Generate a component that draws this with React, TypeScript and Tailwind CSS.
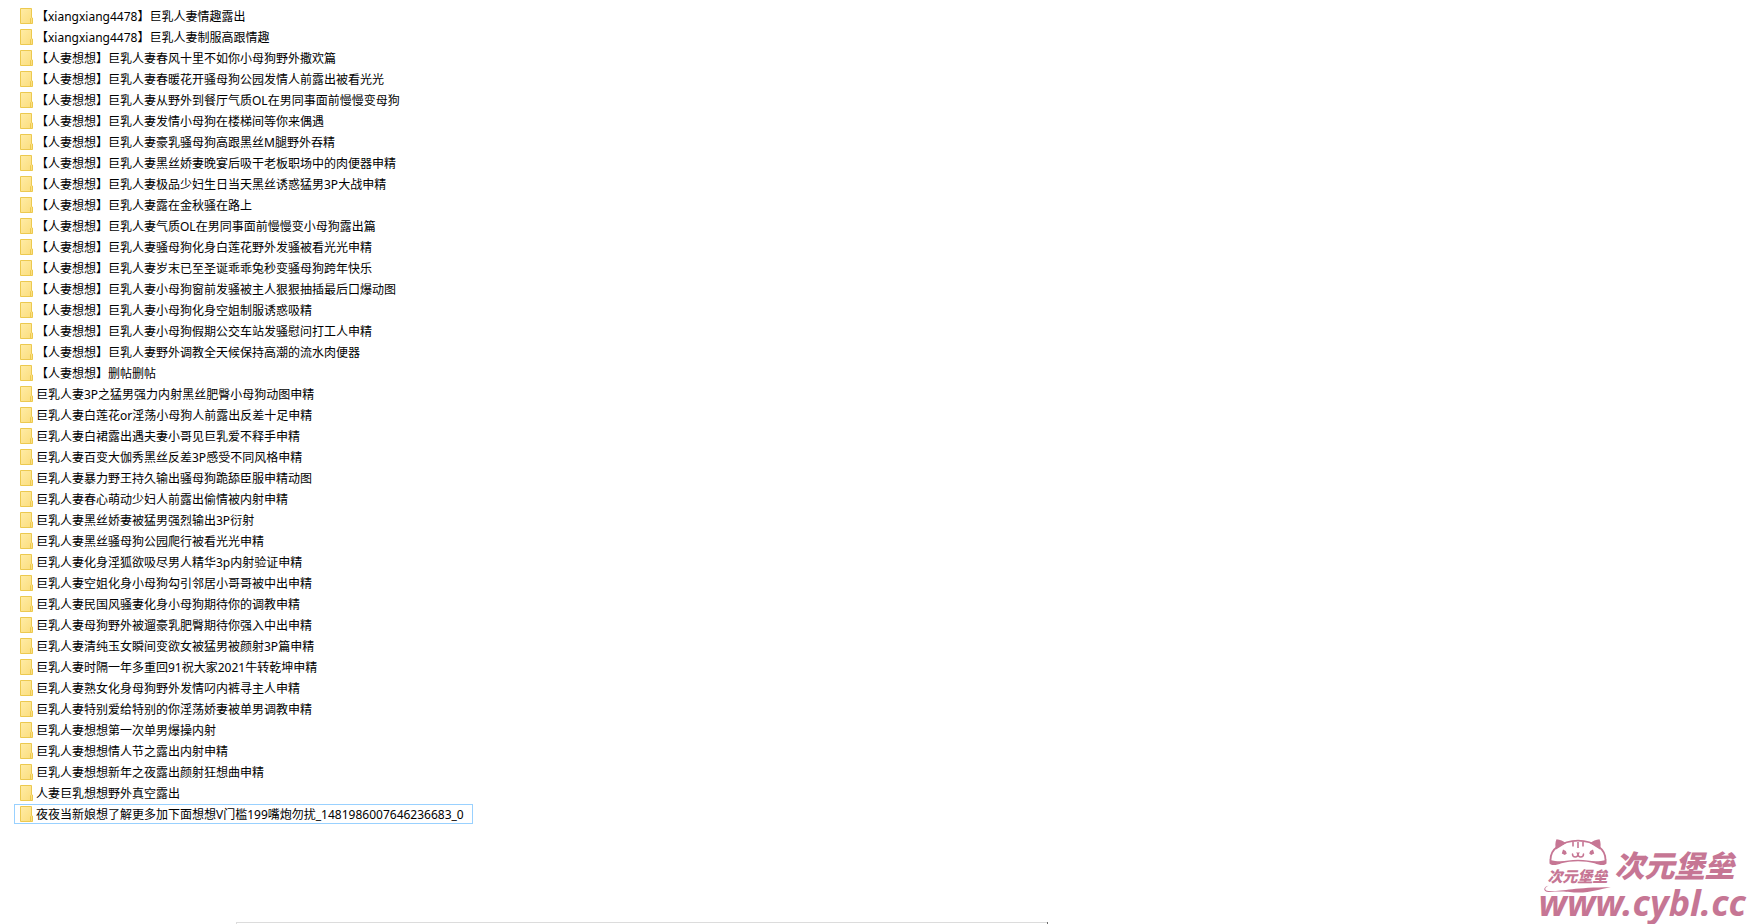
const names: string[] = [
  "【xiangxiang4478】巨乳人妻情趣露出",
  "【xiangxiang4478】巨乳人妻制服高跟情趣",
  "【人妻想想】巨乳人妻春风十里不如你小母狗野外撒欢篇",
  "【人妻想想】巨乳人妻春暖花开骚母狗公园发情人前露出被看光光",
  "【人妻想想】巨乳人妻从野外到餐厅气质OL在男同事面前慢慢变母狗",
  "【人妻想想】巨乳人妻发情小母狗在楼梯间等你来偶遇",
  "【人妻想想】巨乳人妻豪乳骚母狗高跟黑丝M腿野外吞精",
  "【人妻想想】巨乳人妻黑丝娇妻晚宴后吸干老板职场中的肉便器申精",
  "【人妻想想】巨乳人妻极品少妇生日当天黑丝诱惑猛男3P大战申精",
  "【人妻想想】巨乳人妻露在金秋骚在路上",
  "【人妻想想】巨乳人妻气质OL在男同事面前慢慢变小母狗露出篇",
  "【人妻想想】巨乳人妻骚母狗化身白莲花野外发骚被看光光申精",
  "【人妻想想】巨乳人妻岁末已至圣诞乖乖兔秒变骚母狗跨年快乐",
  "【人妻想想】巨乳人妻小母狗窗前发骚被主人狠狠抽插最后口爆动图",
  "【人妻想想】巨乳人妻小母狗化身空姐制服诱惑吸精",
  "【人妻想想】巨乳人妻小母狗假期公交车站发骚慰问打工人申精",
  "【人妻想想】巨乳人妻野外调教全天候保持高潮的流水肉便器",
  "【人妻想想】删帖删帖",
  "巨乳人妻3P之猛男强力内射黑丝肥臀小母狗动图申精",
  "巨乳人妻白莲花or淫荡小母狗人前露出反差十足申精",
  "巨乳人妻白裙露出遇夫妻小哥见巨乳爱不释手申精",
  "巨乳人妻百变大伽秀黑丝反差3P感受不同风格申精",
  "巨乳人妻暴力野王持久输出骚母狗跪舔臣服申精动图",
  "巨乳人妻春心萌动少妇人前露出偷情被内射申精",
  "巨乳人妻黑丝娇妻被猛男强烈输出3P衍射",
  "巨乳人妻黑丝骚母狗公园爬行被看光光申精",
  "巨乳人妻化身淫狐欲吸尽男人精华3p内射验证申精",
  "巨乳人妻空姐化身小母狗勾引邻居小哥哥被中出申精",
  "巨乳人妻民国风骚妻化身小母狗期待你的调教申精",
  "巨乳人妻母狗野外被遛豪乳肥臀期待你强入中出申精",
  "巨乳人妻清纯玉女瞬间变欲女被猛男被颜射3P篇申精",
  "巨乳人妻时隔一年多重回91祝大家2021牛转乾坤申精",
  "巨乳人妻熟女化身母狗野外发情叼内裤寻主人申精",
  "巨乳人妻特别爱给特别的你淫荡娇妻被单男调教申精",
  "巨乳人妻想想第一次单男爆操内射",
  "巨乳人妻想想情人节之露出内射申精",
  "巨乳人妻想想新年之夜露出颜射狂想曲申精",
  "人妻巨乳想想野外真空露出",
  "夜夜当新娘想了解更多加下面想想V门槛199嘴炮勿扰_1481986007646236683_0",
];

const focusedIndex = names.length - 1;

function FolderIcon() {
  return (
    <svg width="13" height="16" viewBox="0 0 13 16" className="shrink-0" aria-hidden="true">
      <defs>
        <linearGradient id="folder" x1="0" y1="0" x2="1" y2="1">
          <stop offset="0" stopColor="#ffeca6" />
          <stop offset="1" stopColor="#fbdd7c" />
        </linearGradient>
      </defs>
      <path d="M.5.5h11v9l1 .5v5.500H.5z" fill="url(#folder)" stroke="#ecc94f" />
      <path d="M10.500 15.500v-5l1-1" fill="none" stroke="#ecc94f" />
    </svg>
  );
}

function FolderRow({ name, focused }: { name: string; focused: boolean }) {
  return (
    <li className="flex h-[21px] items-start">
      <button
        type="button"
        className={
          "flex h-5 items-center gap-[3px] border pr-2 pl-[5px] text-xs leading-4 whitespace-nowrap text-black " +
          (focused ? "border-[#99d1ff]" : "border-transparent")
        }
      >
        <FolderIcon />
        <span className="pt-[2px]">{name}</span>
      </button>
    </li>
  );
}

function CatMark() {
  return (
    <svg width="62" height="29" viewBox="0 0 62 29" aria-hidden="true">
      <path
        d="M3.500 22C3.500 16 6.500 11.500 10 9c12-8.500 30-8.500 42 0 3.500 2.500 6.500 7 6.500 13"
        fill="none"
        stroke="currentColor"
        strokeWidth="1.800"
      />
      <path
        d="M9.500 1.200c3.500.3 7 1.800 9.500 4L9 11.500C8 8 8.200 4 9.500 1.200zM52.500 1.200c-3.500.3-7 1.800-9.500 4l10 6.300c1-3.500.8-7.500-.5-10.300z"
        fill="currentColor"
      />
      <path
        d="M2.500 25.500V21.500C14 25.500 20 21.800 31 21.800s17 3.700 28.500-.3v4c-3 3-8 1-12-.3-9-2.700-24-2.700-33 0-4 1.300-9 3.300-12 .3z"
        fill="currentColor"
      />
      <path d="M26 4v4.500M31 4v6M36 4v4.500" stroke="currentColor" strokeWidth="1.600" />
      <path
        d="M25.500 16c0 4 5.500 4 5.500 0 0 4 5.500 4 5.500 0"
        fill="none"
        stroke="currentColor"
        strokeWidth="1.500"
        strokeLinecap="round"
      />
      <path
        d="M29 14.500h4l-2 2.500zM16 11.500l2.800 1.500 1 2.500-2 1.500-3-1.500zM46 11.500l-2.800 1.500-1 2.500 2 1.500 3-1.500z"
        fill="currentColor"
      />
    </svg>
  );
}

function Swash() {
  return (
    <svg width="74" height="8" viewBox="0 0 76 9" aria-hidden="true">
      <path
        d="M6 .5C0 2-.5 6.500 5 6.800 20 7.500 32 2.500 75 2.500 62 4.500 52 9 36 8.500 26 8.300 22 6.500 5 8 -2 7.500-1.500 1.500 6 .5z"
        fill="currentColor"
      />
    </svg>
  );
}

function Watermark() {
  return (
    <a
      href="#home"
      className="absolute right-[14px] bottom-0 flex flex-col text-[#c67694]"
    >
      <span className="flex items-start pl-[2px]">
        <span className="flex flex-col items-center">
          <CatMark />
          <span className="pt-px text-[15px] leading-[17px] font-black italic">次元堡垒</span>
          <Swash />
        </span>
        <span className="pt-[14px] text-[30px] leading-7 font-black italic">次元堡垒</span>
      </span>
      <span className="-mt-2 h-[39px] text-4xl leading-9 font-bold italic">www.cybl.cc</span>
    </a>
  );
}

export default function App() {
  return (
    <div className="relative flex min-h-screen flex-col justify-between bg-white font-['Noto_Sans','Noto_Sans_CJK_SC',sans-serif]">
      <main className="pt-[6px] pl-[14px]">
        <ul>
          {names.map((name, i) => (
            <FolderRow key={name} name={name} focused={i === focusedIndex} />
          ))}
        </ul>
      </main>
      <div className="mr-[712px] ml-[236px] flex h-[2px] justify-end border-t border-l border-[#dcdcdc]">
        <span className="-mt-px h-[2px] w-px bg-[#6b6b6b]" />
      </div>
      <Watermark />
    </div>
  );
}
